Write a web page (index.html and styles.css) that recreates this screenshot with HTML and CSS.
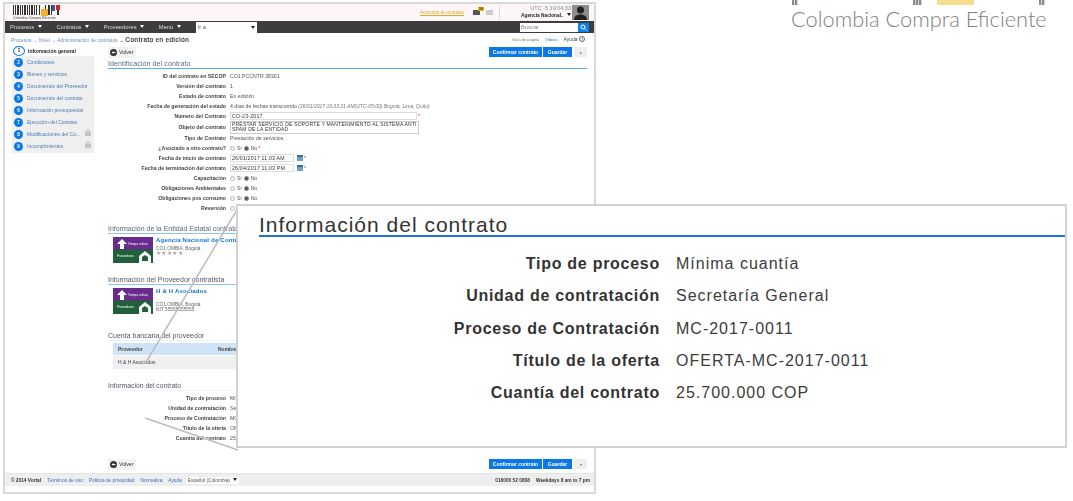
FILE: index.html
```html
<!DOCTYPE html>
<html lang="es">
<head>
<meta charset="utf-8">
<title>Contrato en edición</title>
<link rel="stylesheet" href="styles.css">
</head>
<body>
<div class="logo">
  <div class="logo-marks"><i class="m m1"></i><i class="m m2"></i><i class="m m3"></i><i class="m m4"></i></div>
  <div class="logo-text">Colombia Compra Eficiente</div>
</div>

<div class="shot">
  <header class="top">
    <div class="brand">
      <svg class="barcode" width="48" height="11" viewBox="0 0 48 11">
        <path d="M0 0h1v10H0zM2 0h1v10H2zM4 0h2v10H4zM7 0h1v10H7zM9 0h1v10H9zM11 0h2v10h-2zM14 0h1v10h-1zM16 0h1v10h-1zM18 0h2v10h-2zM21 0h1v10h-1zM23 0h1v10h-1zM26 0h1v10h-1zM32 0h1v5h-1zM35 0h2v10h-2zM38 0h1v10h-1zM44 0h2v10h-2z" fill="#333"/>
        <rect x="28" y="4" width="7" height="7" fill="#f0b030"/>
        <rect x="39" y="0" width="3" height="6" fill="#3a5a9a"/>
        <rect x="43" y="0" width="4" height="5" fill="#d22"/>
      </svg>
      <span class="brand-name">Colombia Compra Eficiente</span>
    </div>
    <a class="contrast">Aumentar el contraste</a>
    <div class="msg"><i class="env dark"></i><b>19</b><i class="env"></i></div>
    <div class="user">
      <div class="utc">UTC -5 19:04:33</div>
      <div class="agency">Agencia Nacional.. <span class="tri dark-tri"></span></div>
    </div>
    <svg class="avatar" width="17" height="15" viewBox="0 0 17 15"><rect width="17" height="15" fill="#8d8d8d"/><circle cx="8.500" cy="5" r="3.500" fill="#222"/><path d="M2 15c0-4 3-5.500 6.500-5.500S15 11 15 15z" fill="#222"/></svg>
  </header>

  <nav class="nav">
    <span class="nav-item">Procesos <span class="tri"></span></span>
    <span class="nav-item">Contratos <span class="tri"></span></span>
    <span class="nav-item">Proveedores <span class="tri"></span></span>
    <span class="nav-item">Menú <span class="tri"></span></span>
    <span class="goto">Ir a <span class="tri dark-tri"></span></span>
    <span class="search"><span class="search-box">Buscar</span><span class="search-btn"><svg width="11" height="9" viewBox="0 0 11 9"><circle cx="5" cy="4" r="2" fill="none" stroke="#fff"/><path d="M6.500 5.500L8.500 7.500" stroke="#fff"/></svg></span></span>
  </nav>

  <div class="crumbs">
    <div><span class="crumb-link">Procesos → Nivel → Administración de contratos</span> → <b>Contrato en edición</b></div>
    <div class="crumb-right"><span>Guía de página</span> <span class="blue">Videos</span> <span class="help">Ayuda <i>?</i></span></div>
  </div>

  <div class="body">
    <aside class="side">
      <div class="step current"><span class="num">1</span><span>Información general</span></div>
      <div class="side-list">
        <div class="step"><span class="num">2</span><span>Condiciones</span></div>
        <div class="step"><span class="num">3</span><span>Bienes y servicios</span></div>
        <div class="step"><span class="num">4</span><span>Documentos del Proveedor</span></div>
        <div class="step"><span class="num">5</span><span>Documentos del contrato</span></div>
        <div class="step"><span class="num">6</span><span>Información presupuestal</span></div>
        <div class="step"><span class="num">7</span><span>Ejecución del Contrato</span></div>
        <div class="step"><span class="num">8</span><span>Modificaciones del Co...</span><svg class="lock" width="6" height="7" viewBox="0 0 6 7"><path d="M1.500 3V2a1.500 1.500 0 013 0v1" fill="none" stroke="#bbb"/><rect y="3" width="6" height="4" fill="#c4c4c4"/></svg></div>
        <div class="step"><span class="num">9</span><span>Incumplimientos</span><svg class="lock" width="6" height="7" viewBox="0 0 6 7"><path d="M1.500 3V2a1.500 1.500 0 013 0v1" fill="none" stroke="#bbb"/><rect y="3" width="6" height="4" fill="#c4c4c4"/></svg></div>
      </div>
    </aside>

    <main class="main">
      <div class="actions">
        <button class="back"><svg class="back-ico" width="7" height="7" viewBox="0 0 7 7"><circle cx="3.500" cy="3.500" r="3.500" fill="#333"/><path d="M1.500 3.500L3.500 2v1h2v1h-2v1z" fill="#fff"/></svg>Volver</button>
        <div class="btns"><button class="pri wide">Confirmar contrato</button><button class="pri">Guardar</button><button class="more">▸</button></div>
      </div>
      <h2 class="sec sec-first">Identificación del contrato</h2>
      <div class="form">
        <div class="row"><label>ID del contrato en SECOP</label><span>CO1.PCCNTR.38301</span></div>
        <div class="row"><label>Versión del contrato</label><span class="blue">1</span></div>
        <div class="row"><label>Estado de contrato</label><span>En edición</span></div>
        <div class="row"><label>Fecha de generación del estado</label><span>4 días de fechas transcurrido <em>(26/01/2017 10:33:21 AM(UTC-05:00) Bogotá, Lima, Quito)</em></span></div>
        <div class="row"><label>Número del Contrato</label><span class="input long">CO-23-2017</span><i class="req">*</i></div>
        <div class="row tall"><label>Objeto del contrato</label><span class="input area">PRESTAR SERVICIO DE SOPORTE Y MANTENIMIENTO AL SISTEMA ANTI<br>SPAM DE LA ENTIDAD</span></div>
        <div class="row"><label>Tipo de Contrato</label><span>Prestación de servicios</span></div>
        <div class="row"><label>¿Asociado a otro contrato?</label><span class="radio"><i></i>Si <i class="on"></i>No</span><i class="req">*</i></div>
        <div class="row"><label>Fecha de inicio de contrato</label><span class="input date">26/01/2017 11:03 AM</span><i class="cal"></i><i class="req">*</i></div>
        <div class="row"><label>Fecha de terminación del contrato</label><span class="input date">26/04/2017 11:03 PM</span><i class="cal"></i><i class="req">*</i></div>
        <div class="row"><label>Capacitación</label><span class="radio"><i></i>Si <i class="on"></i>No</span></div>
        <div class="row"><label>Obligaciones Ambientales</label><span class="radio"><i></i>Si <i class="on"></i>No</span></div>
        <div class="row"><label>Obligaciones pos consumo</label><span class="radio"><i></i>Si <i class="on"></i>No</span></div>
        <div class="row"><label>Reversión</label><span class="radio"><i></i>Si <i class="on"></i>No</span></div>
      </div>

      <h2 class="sec sec-entity">Información de la Entidad Estatal contratante</h2>
      <div class="party">
        <svg class="party-logo" width="40" height="26" viewBox="0 0 40 26"><rect width="40" height="13" fill="#6a2b8e"/><rect y="12.500" width="40" height="13.500" fill="#1f5f3a"/><path d="M4 7l5-5 5 5h-3v5H7V7z" fill="#fff"/><text x="15" y="8" class="logo-t">Tiempo cultura</text><text x="4" y="20" class="logo-t">Proveedores</text><path d="M26 19l6-5 6 5v7H26z" fill="#fff"/><path d="M29 20l3-2 3 2v4h-6z" fill="#1f5f3a"/></svg>
        <div class="party-info"><a>Agencia Nacional de Contratación</a><p>CO1.OMBIA, Bogotá</p><p class="stars">★★★★★</p></div>
      </div>

      <h2 class="sec sec-prov">Información del Proveedor contratista</h2>
      <div class="party">
        <svg class="party-logo" width="40" height="26" viewBox="0 0 40 26"><rect width="40" height="13" fill="#6a2b8e"/><rect y="12.500" width="40" height="13.500" fill="#1f5f3a"/><path d="M4 7l5-5 5 5h-3v5H7V7z" fill="#fff"/><text x="15" y="8" class="logo-t">Tiempo cultura</text><text x="4" y="20" class="logo-t">Proveedores</text><path d="M26 19l6-5 6 5v7H26z" fill="#fff"/><path d="M29 20l3-2 3 2v4h-6z" fill="#1f5f3a"/></svg>
        <div class="party-info"><a>H &amp; H Asociados</a><p>&nbsp;</p><p>CO1.OMBIA, Bogotá</p><p>NIT 55555555555</p></div>
      </div>

      <h2 class="sec sec-bank">Cuenta bancaria del proveedor</h2>
      <div class="bank">
        <div class="bank-head"><span class="col1">Proveedor</span><span>Nombre</span></div>
        <div class="bank-body"><span class="col1">H &amp; H Asociados</span></div>
      </div>

      <h2 class="sec sec-info">Información del contrato</h2>
      <div class="form form-info">
        <div class="row"><label>Tipo de proceso</label><span>Mínima cuantía</span></div>
        <div class="row"><label>Unidad de contratación</label><span>Secretaría General</span></div>
        <div class="row"><label>Proceso de Contratación</label><span>MC-2017-0011</span></div>
        <div class="row"><label>Título de la oferta</label><span>OFERTA-MC-2017-0011</span></div>
        <div class="row"><label>Cuantía del contrato</label><span>25.700.000 COP</span></div>
      </div>

      <div class="actions actions-bottom">
        <button class="back"><svg class="back-ico" width="7" height="7" viewBox="0 0 7 7"><circle cx="3.500" cy="3.500" r="3.500" fill="#333"/><path d="M1.500 3.500L3.500 2v1h2v1h-2v1z" fill="#fff"/></svg>Volver</button>
        <div class="btns"><button class="pri wide">Confirmar contrato</button><button class="pri">Guardar</button><button class="more">▾</button></div>
      </div>
    </main>
  </div>

  <footer class="foot">
    <span class="foot-copy">© 2014 Vortal</span><a>Términos de uso</a><a>Política de privacidad</a><a>Normativa</a><a>Ayuda</a>
    <span class="lang">Español (Colombia) <span class="tri dark-tri"></span></span>
    <span class="foot-right"><b>018000 52 0808</b><b>Weekdays 8 am to 7 pm</b></span>
  </footer>
</div>

<svg class="callouts" width="1073" height="501" viewBox="0 0 1073 501">
  <path d="M238 208L145 364M145 418L238 450" stroke="#bdbdbd" stroke-width="1.500" fill="none"/>
</svg>

<section class="zoom">
  <h1>Información del contrato</h1>
  <div class="zoom-row"><strong>Tipo de proceso</strong><span>Mínima cuantía</span></div>
  <div class="zoom-row"><strong>Unidad de contratación</strong><span>Secretaría General</span></div>
  <div class="zoom-row"><strong>Proceso de Contratación</strong><span>MC-2017-0011</span></div>
  <div class="zoom-row"><strong>Título de la oferta</strong><span>OFERTA-MC-2017-0011</span></div>
  <div class="zoom-row"><strong>Cuantía del contrato</strong><span>25.700.000 COP</span></div>
</section>
</body>
</html>
```
FILE: styles.css
```css
* { box-sizing: border-box; }
html, body { margin: 0; height: 501px; overflow: hidden; background: #fff; }
body { position: relative; font-family: "Liberation Sans", Arial, sans-serif; color: #333; }
i { font-style: normal; display: inline-block; }
button { font-family: inherit; border: 0; padding: 0; }
h1, h2, p { margin: 0; font-weight: normal; }

/* Desktop-level items */
.logo { position: absolute; left: 791px; top: 0; width: 258px; }
.logo-marks { height: 5px; display: flex; }
.m { height: 5px; background: repeating-linear-gradient(90deg, #8a8a8a 0 2px, #d8d8d8 2px 3px); display: block; }
.m1 { width: 6px; margin-left: 1px; }
.m2 { width: 9px; margin-left: 115px; }
.m3 { width: 37px; margin-left: 15px; background: #f8dc8e; }
.m4 { width: 6px; margin-left: 65px; }
.logo-text { font-family: Lato, sans-serif; font-weight: 300; font-size: 21.800px; line-height: 28px; color: #808080; white-space: nowrap; margin-top: 0; }

.shot { position: absolute; left: 3px; top: 2px; width: 593px; height: 492px; border: 2px solid #d9d9d9; background: #fff; filter: blur(.35px); display: flex; flex-direction: column; font-size: 5.500px; }
.callouts { position: absolute; left: 0; top: 0; pointer-events: none; }

.zoom { position: absolute; left: 236px; top: 204px; width: 831px; height: 244px; background: #fff; border: 2px solid #d2d2d2; padding: 7px 0 0 21px; }
.zoom h1 { font-size: 21px; line-height: 24px; letter-spacing: 1px; color: #333; border-bottom: 2px solid #1a74d0; height: 24px; margin-bottom: 16px; white-space: nowrap; }
.zoom-row { display: flex; height: 32.300px; font-size: 16px; line-height: 22px; letter-spacing: 1px; color: #3c3c3c; white-space: nowrap; }
.zoom-row strong { width: 401px; text-align: right; margin-right: 16px; color: #333; letter-spacing: .73px; }

/* Header */
.top { height: 17px; background: #fdf6f6; display: flex; align-items: center; padding: 0 5px 0 8px; flex: none; }
.brand { width: 60px; flex: none; display: flex; flex-direction: column; }
.barcode { display: block; }
.brand-name { font-size: 3.500px; line-height: 4px; color: #444; white-space: nowrap; }
.contrast { margin-left: 347px; color: #e6a92c; font-size: 4.500px; text-decoration: underline; white-space: nowrap; width: 46px; flex: none; }
.msg { margin-left: 7px; width: 22px; display: flex; position: relative; gap: 6px; flex: none; }
.msg b { position: absolute; left: 5px; top: -3px; font-size: 3.500px; background: #f0b800; padding: 0 1px; }
.env { width: 7px; height: 5px; background: #ccc; }
.env.dark { background: #555; }
.user { margin-left: 4px; border-left: 1px solid #ddd; padding-left: 20px; width: 72px; height: 15px; text-align: right; line-height: 7px; flex: none; }
.utc { color: #888; font-size: 5.500px; white-space: nowrap; }
.agency { color: #222; font-weight: bold; font-size: 4.800px; white-space: nowrap; }
.avatar { margin-left: 1px; display: block; flex: none; }

.tri { display: inline-block; width: 0; height: 0; border: 2.500px solid transparent; border-top: 3px solid #fff; border-bottom: 0; vertical-align: 1px; margin-left: 2px; }
.dark-tri { border-top-color: #222; }

.nav { height: 12px; background: #3d3d3d; display: flex; align-items: center; padding-left: 5px; color: #ddd; font-size: 5.800px; flex: none; }
.nav-item { margin-right: 14.600px; white-space: nowrap; }
.goto { width: 61px; height: 11px; background: #fff; color: #666; display: flex; justify-content: space-between; align-items: center; padding: 0 2px; }
.goto .tri { margin-right: 0; }
.search { margin-left: auto; margin-right: 5px; display: flex; height: 9px; }
.search-box { width: 58px; background: #fff; color: #888; padding-left: 1px; line-height: 9px; }
.search-btn { width: 11px; background: #0d7fe8; display: block; }
.search-btn svg { display: block; }

.crumbs { height: 12px; display: flex; justify-content: space-between; align-items: center; padding: 0 9px 0 6px; font-size: 5px; flex: none; }
.crumbs b { font-size: 6.500px; font-weight: bold; color: #444; letter-spacing: .15px; }
.crumb-link { color: #6a8fc0; font-size: 4.900px; }
.crumb-right { display: flex; gap: 6px; color: #777; font-size: 4px; align-items: center; }
.help { font-size: 5px; font-weight: normal; color: #444; }
.help i { border: 1px solid #666; border-radius: 50%; width: 6px; height: 6px; font-size: 4px; line-height: 5px; text-align: center; }
.blue { color: #1a73c9; }

/* Body */
.body { display: flex; flex: 1; padding-left: 7px; min-height: 0; }
.side { width: 82px; flex: none; font-size: 5px; }
.step { height: 12px; display: flex; align-items: center; color: #4a7cbc; white-space: nowrap; padding-left: 2px; position: relative; }
.step.current { color: #222; font-weight: bold; height: 11px; }
.num { width: 9px; height: 9px; border-radius: 50%; background: #0a78e6; color: #fff; font-size: 4.500px; font-weight: bold; text-align: center; line-height: 9px; margin-right: 4px; flex: none; }
.current .num { background: #fff; color: #222; border: 1px solid #0a78e6; width: 12px; height: 10px; line-height: 8px; margin-left: -1px; margin-right: 3px; }
.side-list { background: #efefef; padding-bottom: 1px; }
.lock { position: absolute; right: 3px; top: 1px; display: block; }

.main { margin-left: 14px; width: 479px; flex: none; font-size: 5.200px; padding-top: 1px; }
.actions { display: flex; justify-content: space-between; align-items: center; height: 12px; }
.back { height: 11px; width: 28px; background: #f2f2f2; display: flex; align-items: center; gap: 2px; font-size: 5.200px; color: #333; padding-left: 2px; }
.back-ico { display: block; flex: none; }
.btns { display: flex; gap: 1px; }
.pri { height: 10px; width: 29px; background: #0a78e6; color: #fff; font-size: 5px; font-weight: bold; }
.pri.wide { width: 53px; }
.more { width: 13px; height: 10px; margin-left: 1px; background: #eee; color: #666; font-size: 4px; }

.sec { font-size: 7px; color: #5a6a7a; line-height: 9px; border-bottom: 1px solid #8cc4f0; white-space: nowrap; }
.sec-first { margin-top: 1px; height: 10px; letter-spacing: .12px; border-bottom-color: #5aaeee; }
.form { margin-top: 2px; }
.row { display: flex; height: 10px; align-items: center; white-space: nowrap; }
.row label { width: 118px; text-align: right; margin-right: 4px; font-weight: bold; color: #444; flex: none; }
.row > span { color: #555; }
.row em { font-size: 5px; color: #777; }
.row.tall { height: 12px; }
.input { border: 1px solid #ddd; background: #fff; display: block; color: #333 !important; font-size: 5.200px; height: 8px; line-height: 6px; padding-left: 1px; letter-spacing: .2px; }
.long { width: 187px; }
.area { width: 189px; height: 13px; line-height: 5px; border-color: #ccc; font-size: 5px; }
.date { width: 64px; }
.cal { width: 6px; height: 6px; margin-left: 3px; background: #6aa0cc; border-top: 2px solid #3a6f9d; }
.req { color: #d02020; font-size: 5px; margin-left: 1px; }
.radio { display: flex; align-items: center; gap: 1px; }
.radio i { width: 5px; height: 5px; border: 1px solid #bbb; border-radius: 50%; background: #f4f4f4; margin-right: 1px; }
.radio i.on { background: #555; border-color: #888; margin-left: 1px; }

.sec-entity { margin-top: 11px; height: 10px; }
.party { display: flex; padding: 3px 0 0 5px; }
.party-logo { display: block; flex: none; }
.logo-t { font-size: 3px; fill: #fff; font-family: "Liberation Sans", sans-serif; }
.party-info { margin-left: 3px; font-size: 4.800px; line-height: 5px; color: #666; }
.party-info a { color: #1473d6; font-weight: bold; font-size: 6px; display: block; line-height: 7px; margin-bottom: 2px; letter-spacing: .2px; }
.stars { color: #aaa; font-size: 6px; letter-spacing: .4px; }
.sec-prov { margin-top: 12px; height: 10px; color: #556; }
.sec-bank { margin-top: 17px; height: 10px; border-bottom-color: #eef3f8; color: #556; }
.bank { margin: 2px 0 0 5px; }
.bank-head { height: 12px; background: #cfe3f7; display: flex; align-items: center; font-weight: bold; color: #444; font-size: 5px; }
.col1 { width: 105px; padding-left: 5px; display: block; }
.bank-body { height: 13px; background: #f0f0f0; padding-top: 3px; color: #444; font-size: 5px; margin-top: 1px; }
.sec-info { margin-top: 12px; height: 10px; font-size: 6.800px; border-bottom-color: #f1f5fa; color: #556; }
.form-info { margin-top: 2px; }
.actions-bottom { margin-top: 15px; }

.foot { height: 13px; background: #eee; border-top: 1px solid #e4e4e4; display: flex; align-items: center; padding: 0 4px 0 6px; font-size: 4.800px; color: #4070b8; flex: none; margin-bottom: 6px; }
.foot a { margin-left: 6px; white-space: nowrap; }
.foot-copy { color: #333; font-weight: bold; white-space: nowrap; }
.lang { margin-left: 4px; background: #fff; color: #555; height: 7px; padding: 0 2px; white-space: nowrap; line-height: 7px; }
.foot-right { margin-left: auto; display: flex; gap: 6px; color: #333; white-space: nowrap; }
```
